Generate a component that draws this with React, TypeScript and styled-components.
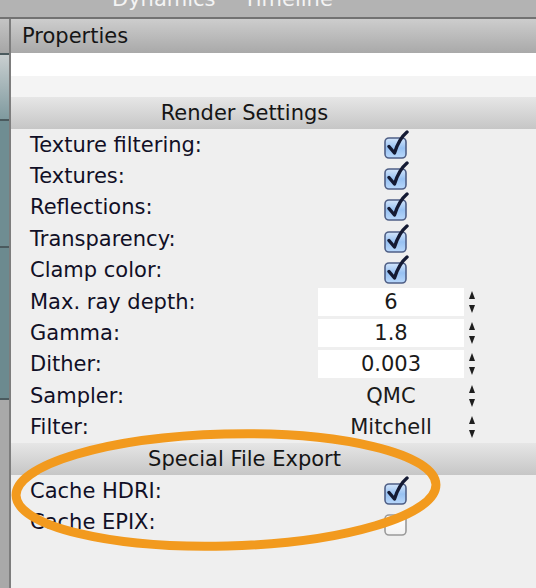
import styled, { createGlobalStyle } from 'styled-components';

const GlobalStyle = createGlobalStyle`
  html, body {
    margin: 0;
    padding: 0;
    background: #efefef;
  }
  body {
    font-family: "DejaVu Sans", "Liberation Sans", sans-serif;
    font-size: 21px;
    color: #111;
  }
`

const Window = styled.div`
  width: 536px;
  height: 588px;
  overflow: hidden;
  display: flex;
  flex-direction: column;
  position: relative;
`

const TitleBar = styled.div`
  height: 17px;
  flex: none;
  background: #b3b3b3;
  border-bottom: 2px solid #727272;
  overflow: hidden;
  display: flex;
  gap: 28px;
  padding-left: 112px;
`

const TitleTab = styled.span`
  color: #f4f4f4;
  font-size: 21px;
  line-height: 21px;
  margin-top: -11px;
`

const Body = styled.div`
  flex: 1;
  display: flex;
`

const Dock = styled.div`
  width: 9px;
  flex: none;
  display: flex;
  flex-direction: column;
  border-right: 2px solid #7d7d7d;
`

const DockPart = styled.div<{ $h?: number; $bg: string }>`
  height: ${p => (p.$h ? `${p.$h}px` : 'auto')};
  flex: ${p => (p.$h ? 'none' : '1')};
  background: ${p => p.$bg};
  border-bottom: ${p => (p.$h ? '2px solid #4a5a5e' : 'none')};
`

const Panel = styled.div`
  flex: 1;
  display: flex;
  flex-direction: column;
`

const PanelHeader = styled.div`
  height: 34px;
  flex: none;
  background: linear-gradient(#cdcdcd, #a9a9a9);
  padding-left: 11px;
  display: flex;
  align-items: center;
  color: #151515;
`

const Field = styled.div`
  height: 23px;
  background: #ffffff;
`

const Spacer = styled.div`
  height: 21px;
  background: #f4f4f4;
`

const SectionHeader = styled.div`
  height: 32px;
  background: linear-gradient(#e6e6e6, #c6c6c6);
  display: flex;
  align-items: center;
  justify-content: center;
  padding-right: 58px;
  color: #151515;
`

const Row = styled.div`
  height: 31.4px;
  display: grid;
  grid-template-columns: 1fr 146px 30px;
  align-items: center;
  padding-left: 19px;
  padding-right: 42px;
`

const Label = styled.span`
  color: #110f26;
`

const Cell = styled.div<{ $white?: boolean }>`
  height: 28px;
  display: flex;
  align-items: center;
  justify-content: center;
  background: ${p => (p.$white ? '#ffffff' : 'transparent')};
  color: #1a1a1a;
`

const CheckCell = styled.div`
  display: flex;
  justify-content: center;
  padding-left: 9px;
`

const Stepper = styled.div`
  display: flex;
  flex-direction: column;
  align-items: center;
  gap: 6px;
  padding-right: 14px;
`

const Arrow = styled.div<{ $down?: boolean }>`
  width: 0;
  height: 0;
  border-left: 3.5px solid transparent;
  border-right: 3.5px solid transparent;
  ${p => (p.$down ? 'border-top: 8px solid #1e1e1e;' : 'border-bottom: 8px solid #1e1e1e;')}
`

const Rest = styled.div`
  flex: 1;
`

const Mark = styled.svg`
  position: absolute;
  left: 0;
  top: 0;
  pointer-events: none;
`

function CheckBox({ checked }: { checked: boolean }) {
  return (
    <svg width="28" height="30" viewBox="0 0 28 30">
      <defs>
        <linearGradient id="cbFill" x1="0" y1="0" x2="0" y2="1">
          <stop offset="0" stopColor="#d4e6fb" />
          <stop offset="0.5" stopColor="#97c1f2" />
          <stop offset="1" stopColor="#b9d8fb" />
        </linearGradient>
        <linearGradient id="cbOff" x1="0" y1="0" x2="0" y2="1">
          <stop offset="0" stopColor="#ffffff" />
          <stop offset="1" stopColor="#f2f2f2" />
        </linearGradient>
      </defs>
      <rect
        x="3" y="8" width="21" height="20" rx="4"
        fill={checked ? 'url(#cbFill)' : 'url(#cbOff)'}
        stroke={checked ? '#4f5f86' : '#9a9a9a'}
        strokeWidth="1.6"
      />
      {checked && (
        <path
          d="M7 16.5 L12.5 23 C15 15 19 7 25 2"
          fill="none"
          stroke="#141a33"
          strokeWidth="3.4"
          strokeLinecap="round"
          strokeLinejoin="round"
        />
      )}
    </svg>
  )
}

function Steps() {
  return (
    <Stepper>
      <Arrow />
      <Arrow $down />
    </Stepper>
  )
}

type Setting =
  | { label: string; kind: 'check'; checked: boolean }
  | { label: string; kind: 'number'; value: string }
  | { label: string; kind: 'choice'; value: string }

const RENDER: Setting[] = [
  { label: 'Texture filtering:', kind: 'check', checked: true },
  { label: 'Textures:', kind: 'check', checked: true },
  { label: 'Reflections:', kind: 'check', checked: true },
  { label: 'Transparency:', kind: 'check', checked: true },
  { label: 'Clamp color:', kind: 'check', checked: true },
  { label: 'Max. ray depth:', kind: 'number', value: '6' },
  { label: 'Gamma:', kind: 'number', value: '1.8' },
  { label: 'Dither:', kind: 'number', value: '0.003' },
  { label: 'Sampler:', kind: 'choice', value: 'QMC' },
  { label: 'Filter:', kind: 'choice', value: 'Mitchell' },
]

const EXPORT: Setting[] = [
  { label: 'Cache HDRI:', kind: 'check', checked: true },
  { label: 'Cache EPIX:', kind: 'check', checked: false },
]

function SettingRow({ s }: { s: Setting }) {
  return (
    <Row>
      <Label>{s.label}</Label>
      {s.kind === 'check' ? (
        <CheckCell><CheckBox checked={s.checked} /></CheckCell>
      ) : (
        <Cell $white={s.kind === 'number'}>{s.value}</Cell>
      )}
      {s.kind !== 'check' && <Steps />}
    </Row>
  )
}

export default function App() {
  return (
    <Window>
      <GlobalStyle />
      <TitleBar>
        <TitleTab>Dynamics</TitleTab>
        <TitleTab>Timeline</TitleTab>
      </TitleBar>
      <Body>
        <Dock>
          <DockPart $h={34} $bg="linear-gradient(#c4c4c4, #a6a6a6)" />
          <DockPart $h={64} $bg="linear-gradient(#c9cfd0, #7f9a9f)" />
          <DockPart $h={125} $bg="#6f8d92" />
          <DockPart $h={150} $bg="#6c8a8f" />
          <DockPart $bg="#a9a9a9" />
        </Dock>
        <Panel>
          <PanelHeader>Properties</PanelHeader>
          <Field />
          <Spacer />
          <SectionHeader>Render Settings</SectionHeader>
          {RENDER.map(s => <SettingRow key={s.label} s={s} />)}
          <SectionHeader>Special File Export</SectionHeader>
          {EXPORT.map(s => <SettingRow key={s.label} s={s} />)}
          <Rest />
        </Panel>
      </Body>
      <Mark width="536" height="588" viewBox="0 0 536 588">
        <ellipse
          cx="226" cy="490" rx="210" ry="56"
          transform="rotate(-1.5 226 490)"
          fill="none"
          stroke="#f29a1e"
          strokeWidth="9"
        />
      </Mark>
    </Window>
  )
}
